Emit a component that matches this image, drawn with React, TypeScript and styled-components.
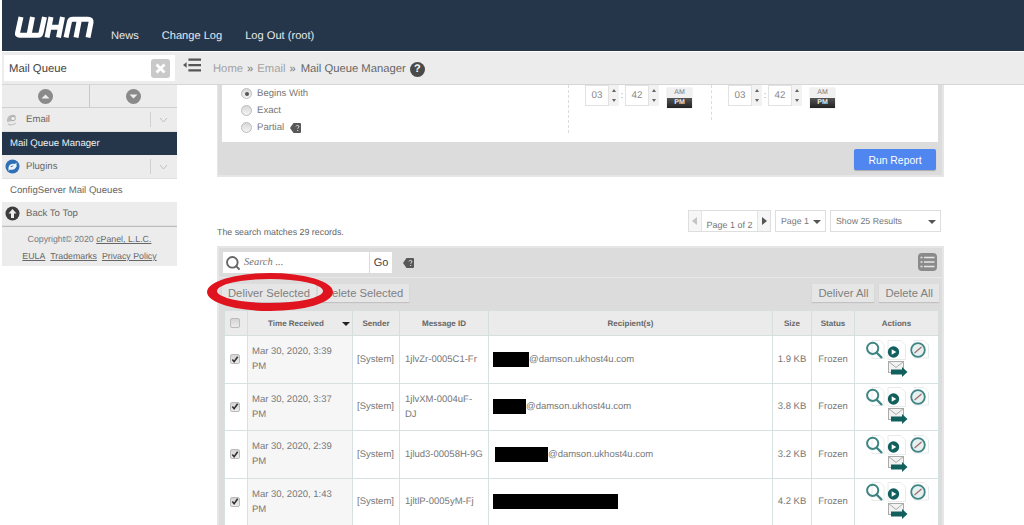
import React from "react";
import styled, { createGlobalStyle } from "styled-components";
import { Search } from "lucide-react";

const Global = createGlobalStyle`
  html, body { margin: 0; padding: 0; background: #fff; }
  body { font-family: "Liberation Sans", Arial, sans-serif; color: #666; overflow: hidden; text-rendering: geometricPrecision; }
  * { box-sizing: border-box; }
`;

const Page = styled.div`
  width: 1024px; height: 525px; overflow: hidden; position: relative; padding-left: 2px; background: #fff;
`;
const Header = styled.header`
  height: 51px; background: #25364a; display: flex; align-items: flex-start; padding-left: 11px;
`;
const Logo = styled.svg`width: 82px; height: 26px; margin-top: 15px; flex: none;`;
const TopNav = styled.nav`display: flex; gap: 23px; margin-left: 16px; padding-top: 29px;`;
const TopLink = styled.a`color: #e6eaee; font-size: 11.1px; line-height: 15px;`;

const TopBar = styled.div`
  height: 33px; margin-top: 1px; background: #ececec; border-bottom: 1px solid #d6d6d6; display: flex; align-items: flex-start;
`;
const SearchBox = styled.div`
  width: 171px; height: 26px; margin: 3px 0 0 2px; background: #fff; display: flex; align-items: center; justify-content: space-between; padding: 1px 5px 0 5px;
  font-size: 11.3px; color: #444; flex: none;
`;
const ClearBtn = styled.span`
  width: 19px; height: 19px; border-radius: 3px; background: #c9c9c9; display: flex; align-items: center; justify-content: center;
`;
const Collapse = styled.svg`width: 18px; height: 15px; margin: 6px 0 0 8px; flex: none;`;
const Crumbs = styled.div`
  display: flex; align-items: center; margin: 8px 0 0 12px; font-size: 11.25px; color: #a2a2a2; gap: 4px; height: 18px;
`;
const CrumbNow = styled.span`color: #666; margin-left: 1px;`;
const CrumbSep = styled.span`color: #777;`;
const Help = styled.span`
  width: 15px; height: 15px; border-radius: 50%; background: #4a4a4a; color: #fff; font-size: 11px; font-weight: 700; display: inline-flex; align-items: center; justify-content: center;
`;

const Body = styled.div`display: flex; align-items: flex-start;`;
const Sidebar = styled.aside`width: 175px; flex: none;`;
const ArrowRow = styled.div`display: flex; height: 23px; background: #ececec; border-bottom: 1px solid #d0d0d0;`;
const ArrowCell = styled.div`
  flex: 1; display: flex; align-items: center; justify-content: center;
  & + & { border-left: 1px solid #c8c8c8; }
`;
const SideRow = styled.div<{ $tone: "gray" | "dark" | "white" }>`
  height: ${p => (p.$tone === "gray" ? 24 : 23)}px; display: flex; align-items: center;
  background: ${p => (p.$tone === "dark" ? "#25364a" : p.$tone === "white" ? "#fff" : "#ececec")};
  color: ${p => (p.$tone === "dark" ? "#f0f2f4" : "#666")};
  font-size: 9.6px; padding-left: ${p => (p.$tone === "gray" ? 3 : 8)}px;
  padding-top: ${p => (p.$tone === "white" ? 1 : 0)}px;
  border-bottom: 1px solid ${p => (p.$tone === "gray" ? "#e0e0e0" : "transparent")};
`;
const SideIcon = styled.svg`width: 15px; height: 15px; margin-right: 6px; flex: none;`;
const SideLabel = styled.span`flex: 1;`;
const Chevron = styled.span`
  width: 26px; height: 15px; border-left: 1px solid #d0d0d0; display: flex; align-items: center; justify-content: center; flex: none; margin-right: 1px;
`;
const SideFoot = styled.div`
  height: 40px; background: #ececec; border-top: 1px solid #bdbdbd; text-align: center; font-size: 8.8px; line-height: 17px; color: #777; padding-top: 4px;
  a { color: #666; text-decoration: underline; }
`;
const FootLinks = styled.div`display: flex; justify-content: center; gap: 5px;`;

const Main = styled.main`margin-left: 40px; width: 727px; flex: none;`;

const FilterPanel = styled.section`
  background: #dcdcdc; padding: 0 4px; border: solid #e6e6e6; border-width: 0 2px 2px 1px; height: 92px;
`;
const FilterInner = styled.div`height: 57px; background: #fff; display: flex; align-items: flex-start;`;
const MatchCol = styled.div`width: 346px; height: 57px; padding: 0 0 0 19px; flex: none;`;
const RadioRow = styled.label`display: flex; align-items: center; height: 17px; font-size: 9.6px; color: #777; gap: 5px;`;
const Radio = styled.span<{ $on?: boolean }>`
  width: 11px; height: 11px; border-radius: 50%; border: 1px solid #bbb; display: flex; align-items: center; justify-content: center;
  background: linear-gradient(#d8d8d8, #f4f4f4);
  &::after { content: ""; width: 4px; height: 4px; border-radius: 50%; background: ${p => (p.$on ? "#555" : "transparent")}; }
`;
const TimeCol = styled.div<{ $h: number; $w: number }>`
  width: ${p => p.$w}px; height: ${p => p.$h}px; border-left: 1px dashed #dcdcdc; display: flex; align-items: flex-start; padding-left: 16px; flex: none;
`;
const TimeBox = styled.span`
  width: 24px; height: 21px; border: 1px solid #e2e2e2; font-size: 9.8px; color: #888; display: flex; align-items: center; justify-content: center; flex: none;
`;
const Spin = styled.span`
  width: 10px; height: 21px; background: #f2f2f2; display: flex; flex-direction: column; align-items: center; justify-content: space-around; flex: none;
`;
const UpTri = styled.i`border: 2.5px solid transparent; border-bottom: 3px solid #666; border-top: 0;`;
const DownTri = styled.i`border: 2.5px solid transparent; border-top: 3px solid #666; border-bottom: 0;`;
const Colon = styled.span`width: 6px; font-size: 9px; color: #999; line-height: 21px; text-align: center; flex: none;`;
const AmPm = styled.span`
  width: 25px; height: 20px; margin: 3px 0 0 8px; display: flex; flex-direction: column; font-size: 7px; font-weight: 700; text-align: center; line-height: 10px; flex: none; box-shadow: 0 0 1px #bbb;
`;
const Am = styled.span`background: #f0f0f0; color: #777; font-weight: 400;`;
const Pm = styled.span`background: linear-gradient(#555, #222); color: #eee;`;
const FilterFoot = styled.div`height: 33px; display: flex; justify-content: flex-end; align-items: flex-start; padding: 7px 2px 0 0;`;
const RunBtn = styled.button`
  width: 82px; height: 21px; border: 0; border-radius: 2px; background: #4f86f0; color: #fff; font: 10.4px "Liberation Sans", Arial, sans-serif; box-shadow: 0 1px 1px #aaa; padding: 1px 0 0;
`;

const PagerRow = styled.div`display: flex; justify-content: space-between; align-items: flex-end; margin-top: 33px; height: 23px;`;
const CountText = styled.span`font-size: 8.85px; line-height: 11px; color: #666; transform: translateY(5px);`;
const Pager = styled.div`display: flex; gap: 4px; margin-right: 3px; align-items: flex-start; height: 23px;`;
const PageNav = styled.div`display: flex; height: 22px; width: 83px; border: 1px solid #dedede; font-size: 9px; color: #777;`;
const NavArrow = styled.span<{ $dim?: boolean }>`
  width: 12px; display: flex; align-items: center; justify-content: center; flex: none; background: #f6f6f6;
  &::after { content: ""; border: 4px solid transparent; border-left: 5px solid ${p => (p.$dim ? "#c4c4c4" : "#555")}; border-right: 0; }
`;
const NavPrev = styled(NavArrow)`transform: scaleX(-1);`;
const NavLabel = styled.span`flex: 1; display: flex; align-items: flex-end; justify-content: center; padding-bottom: 1px; border: solid #e4e4e4; border-width: 0 1px;`;
const SelectBox = styled.div<{ $w: number }>`
  width: ${p => p.$w}px; height: 22px; border: 1px solid #dedede; display: flex; align-items: center; justify-content: space-between; padding: 0 4px 1px 5px; font-size: 8.8px; color: #777; background: #fff;
  &::after { content: ""; border: 4px solid transparent; border-top: 4px solid #555; border-bottom: 0; margin-top: 2px; }
`;

const TablePanel = styled.section`margin-top: 13px; background: #dcdcdc; border: 2px solid #e6e6e6; border-bottom: 0; height: 290px; padding: 0 4px;`;
const SearchRow = styled.div`height: 30px; border-bottom: 1px solid #e8e8e8; margin: 0 -4px; padding: 4px 5px 0 4px; display: flex; align-items: flex-start;`;
const TableSearch = styled.div`
  width: 146px; height: 21px; background: #fff; display: flex; align-items: center; padding-left: 2px; gap: 3px; font: italic 10.5px "Liberation Serif", serif; color: #777;
`;
const GoBox = styled.div`width: 22px; height: 21px; margin-left: 1px; background: #fff; color: #444; font-size: 11px; display: flex; align-items: center; justify-content: center;`;
const TagIcon = styled.svg`width: 11px; height: 10px; margin: 6px 0 0 11px; flex: none;`;
const InlineTag = styled(TagIcon)`margin: 0 0 0 1px;`;
const ListIcon = styled.svg`width: 19px; height: 18px; margin: 1px 0 0 auto; flex: none;`;
const ButtonRow = styled.div`display: flex; align-items: flex-start; gap: 2px; height: 32px; padding: 6px 0 0 0; margin: 0 -1px 0 -1px;`;
const GrayBtn = styled.button`
  height: 18px; padding: 0 6px; border: 0; background: #e6e6e6; color: #808080; font: 11.25px "Liberation Sans", Arial, sans-serif; box-shadow: 0 1px 1px #c2c2c2; white-space: nowrap;
`;
const Spacer = styled.span`flex: 1;`;
const RightBtn = styled(GrayBtn)`margin-left: 3px;`;

const Table = styled.table`width: 714px; border-collapse: collapse; table-layout: fixed; background: #fff; margin-left: 1px;`;
const Th = styled.th`
  height: 25px; background: #ebebeb; border: 1px solid #d6dede; font-size: 8px; font-weight: 700; color: #666; text-align: center; padding: 0; position: relative;
`;
const SortTh = styled(Th)`padding-right: 8px;`;
const SortMark = styled.i`position: absolute; right: 2px; top: 11px; border: 4px solid transparent; border-top: 4px solid #222; border-bottom: 0;`;
const Td = styled.td<{ $sorted?: boolean; $center?: boolean }>`
  height: 47.5px; border: 1px solid #d6e2e2; font-size: 9.5px; line-height: 15px; color: #777; padding: 0 4px; overflow: hidden; vertical-align: middle;
  background: ${p => (p.$sorted ? "#f6f6f6" : "#fff")};
  text-align: ${p => (p.$center ? "center" : "left")};
`;
const IdCell = styled(Td)`white-space: pre-line; padding-left: 5px;`;
const Check = styled.span<{ $on?: boolean }>`
  width: 10px; height: 10px; border-radius: 2px; border: 1px solid #bbb; background: linear-gradient(#d4d4d4, #ececec); display: inline-flex; align-items: center; justify-content: center; vertical-align: middle; margin-right: 2px;
  svg { display: ${p => (p.$on ? "block" : "none")}; }
`;
const Redact = styled.span<{ $w: number; $ml?: number }>`
  display: inline-block; width: ${p => p.$w}px; height: 15px; background: #000; vertical-align: middle; margin-left: ${p => p.$ml ?? 0}px;
`;
const ActionWrap = styled.div`display: flex; flex-wrap: wrap; justify-content: center; width: 66px; margin: 0 auto; gap: 0 2px;`;
const ActIcon = styled.svg`width: 20px; height: 20px; flex: none;`;
const MailIcon = styled.svg`width: 20px; height: 18px; flex: none; margin: 1px 0 0 2px;`;

const Ellipse = styled.svg`position: absolute; left: 206px; top: 272px; width: 130px; height: 42px; pointer-events: none;`;

const teal = "#3f8583";
const dark = "#12605e";
const sheet = "#e8ebeb";

const Actions = () => (
  <ActionWrap>
    <ActIcon viewBox="0 0 20 20">
      <path d="M7 .5h8l4 4v14H7z" fill="#fff" stroke={sheet} />
      <circle cx="7.700" cy="8.300" r="5.600" fill="none" stroke={teal} strokeWidth="2" />
      <path d="M11.500 12.500l5.500 5.500" stroke={teal} strokeWidth="2.400" />
    </ActIcon>
    <ActIcon viewBox="0 0 20 20">
      <path d="M1 .5h13l4.500 4.500v14.500H1z" fill="#fff" stroke={sheet} />
      <circle cx="6.500" cy="12" r="5.700" fill={dark} />
      <path d="M4.700 9.300l4.600 2.700-4.600 2.700z" fill="#fff" />
    </ActIcon>
    <ActIcon viewBox="0 0 20 20">
      <path d="M5 .5h10l4.500 4.500v13H5z" fill="#fff" stroke={sheet} />
      <circle cx="9" cy="10" r="6.800" fill="#e6f0f0" stroke={teal} strokeWidth="1.800" />
      <path d="M5.500 13l7-6" stroke="#a06a6a" strokeWidth="1.200" />
    </ActIcon>
    <MailIcon viewBox="0 0 20 18">
      <rect x=".5" y=".5" width="15" height="11" fill="#f2f2f2" stroke="#aaa" />
      <path d="M.5.500l7.500 6 7.500-6" fill="none" stroke="#aaa" />
      <path d="M3 8.500h11V6l5.500 5-5.500 5v-2.500H3z" fill={dark} />
    </MailIcon>
  </ActionWrap>
);

const Tag = ({ as: C = TagIcon }: { as?: typeof TagIcon }) => (
  <C viewBox="0 0 11 10">
    <path d="M3.500 0H10q1 0 1 1v8q0 1-1 1H3.500L0 5z" fill="#585858" />
    <path d="M6 3.400c.3-1.400 3-1.300 2.900.3 0 1-1.200 1-1.200 2M7.700 7v1" fill="none" stroke="#e8e8e8" strokeWidth="1" />
  </C>
);

const rows = [
  { time: "Mar 30, 2020, 3:39 PM", id: "1jlvZr-0005C1-Fr", red: <Redact $w={36} />, tail: "@damson.ukhost4u.com", size: "1.9 KB" },
  { time: "Mar 30, 2020, 3:37 PM", id: "1jlvXM-0004uF-\nDJ", red: <Redact $w={33} />, tail: "@damson.ukhost4u.com", size: "3.8 KB" },
  { time: "Mar 30, 2020, 2:39 PM", id: "1jlud3-00058H-9G", red: <Redact $w={53} $ml={2} />, tail: "@damson.ukhost4u.com", size: "3.2 KB" },
  { time: "Mar 30, 2020, 1:43 PM", id: "1jltlP-0005yM-Fj", red: <Redact $w={125} />, tail: "", size: "4.2 KB" },
];

const TimeSet = () => (
  <>
    <TimeBox>03</TimeBox>
    <Spin><UpTri /><DownTri /></Spin>
    <Colon>:</Colon>
    <TimeBox>42</TimeBox>
    <Spin><UpTri /><DownTri /></Spin>
    <AmPm><Am>AM</Am><Pm>PM</Pm></AmPm>
  </>
);

const CheckMark = () => (
  <svg width="9" height="9" viewBox="0 0 9 9"><path d="M1.500 4.500l2 2.500 4-5.500" fill="none" stroke="#333" strokeWidth="1.800" /></svg>
);

export default function App() {
  return (
    <Page>
      <Global />
      <Header>
        <Logo viewBox="0 0 82 26">
          <g fill="none" stroke="#fff" strokeWidth="5" strokeLinejoin="round">
            <path d="M8 2L4.500 18Q4 20.300 6.500 20.300H25Q27.500 20.300 28 18L31.500 2" />
            <path d="M19.500 2L16 20" />
            <path d="M38 2L34 22.500M49.500 2L45.500 22.500M36 12.200H48" />
            <path d="M53 22.500L56.500 6.500Q57 4.200 60 4.200H75Q78.500 4.200 78 7.500L75 22.500M66.500 4L63 22.500" />
          </g>
        </Logo>
        <TopNav>
          <TopLink>News</TopLink>
          <TopLink>Change Log</TopLink>
          <TopLink>Log Out (root)</TopLink>
        </TopNav>
      </Header>
      <TopBar>
        <SearchBox>
          Mail Queue
          <ClearBtn>
            <svg width="11" height="11" viewBox="0 0 11 11"><path d="M1.500 1.500l8 8M9.500 1.500l-8 8" stroke="#fff" strokeWidth="2.800" /></svg>
          </ClearBtn>
        </SearchBox>
        <Collapse viewBox="0 0 20 16">
          <path d="M6 1.500h14M6 7.500h14M6 13.500h14" stroke="#555" strokeWidth="2.400" />
          <path d="M0 7.500l4-3v6z" fill="#555" />
        </Collapse>
        <Crumbs>
          <span>Home</span><CrumbSep>»</CrumbSep><span>Email</span><CrumbSep>»</CrumbSep>
          <CrumbNow>Mail Queue Manager</CrumbNow><Help>?</Help>
        </Crumbs>
      </TopBar>
      <Body>
        <Sidebar>
          <ArrowRow>
            <ArrowCell>
              <svg width="15" height="15" viewBox="0 0 15 15"><circle cx="7.500" cy="7.500" r="7.500" fill="#8a8a8a" /><path d="M3.500 9.500l4-4 4 4z" fill="#eee" /></svg>
            </ArrowCell>
            <ArrowCell>
              <svg width="15" height="15" viewBox="0 0 15 15"><circle cx="7.500" cy="7.500" r="7.500" fill="#8a8a8a" /><path d="M3.500 5.500l4 4 4-4z" fill="#eee" /></svg>
            </ArrowCell>
          </ArrowRow>
          <SideRow $tone="gray">
            <SideIcon viewBox="0 0 15 15"><path d="M2 8a5.500 5.500 0 0 1 9-4l-3 5-6 1z" fill="#bdbdbd" /><circle cx="8" cy="6.500" r="2.300" fill="#eee" stroke="#aaa" /><path d="M3 12q4 2 8-1" fill="none" stroke="#c8c8c8" strokeWidth="1.500" /></SideIcon>
            <SideLabel>Email</SideLabel>
            <Chevron><svg width="9" height="6" viewBox="0 0 9 6"><path d="M1 1l3.500 4L8 1" fill="none" stroke="#c0c0c0" /></svg></Chevron>
          </SideRow>
          <SideRow $tone="dark">Mail Queue Manager</SideRow>
          <SideRow $tone="gray">
            <SideIcon viewBox="0 0 15 15"><circle cx="7.500" cy="7.500" r="7" fill="#2f6fb5" /><path d="M3.500 8.500q1-4.500 6.500-3.500l1.500-1.500v4.500H7l1.500-1.500q-3-.5-3.500 2.500zM11.500 7q-1 4.500-6.500 3.500L3.500 12V8.500" fill="#eef3f8" /></SideIcon>
            <SideLabel>Plugins</SideLabel>
            <Chevron><svg width="9" height="6" viewBox="0 0 9 6"><path d="M1 1l3.500 4L8 1" fill="none" stroke="#c0c0c0" /></svg></Chevron>
          </SideRow>
          <SideRow $tone="white">ConfigServer Mail Queues</SideRow>
          <SideRow $tone="gray">
            <SideIcon viewBox="0 0 15 15"><circle cx="7.500" cy="7.500" r="7" fill="#3c3c3c" /><path d="M7.500 3l4 4.500H9V12H6V7.500H3.500z" fill="#eee" /></SideIcon>
            <SideLabel>Back To Top</SideLabel>
          </SideRow>
          <SideFoot>
            <div>Copyright© 2020 <a>cPanel, L.L.C.</a></div>
            <FootLinks><a>EULA</a><a>Trademarks</a><a>Privacy Policy</a></FootLinks>
          </SideFoot>
        </Sidebar>
        <Main>
          <FilterPanel>
            <FilterInner>
              <MatchCol>
                <RadioRow><Radio $on />Begins With</RadioRow>
                <RadioRow><Radio />Exact</RadioRow>
                <RadioRow><Radio />Partial <Tag as={InlineTag} /></RadioRow>
              </MatchCol>
              <TimeCol $h={48} $w={143}><TimeSet /></TimeCol>
              <TimeCol $h={35} $w={200}><TimeSet /></TimeCol>
            </FilterInner>
            <FilterFoot><RunBtn>Run Report</RunBtn></FilterFoot>
          </FilterPanel>
          <PagerRow>
            <CountText>The search matches 29 records.</CountText>
            <Pager>
              <PageNav>
                <NavPrev $dim />
                <NavLabel>Page 1 of 2</NavLabel>
                <NavArrow />
              </PageNav>
              <SelectBox $w={51}>Page 1</SelectBox>
              <SelectBox $w={111}>Show 25 Results</SelectBox>
            </Pager>
          </PagerRow>
          <TablePanel>
            <SearchRow>
              <TableSearch><Search size={16} strokeWidth={2.800} color="#666" />Search ...</TableSearch>
              <GoBox>Go</GoBox>
              <Tag />
              <ListIcon viewBox="0 0 19 18">
                <rect width="19" height="18" rx="4" fill="#8a8a8a" />
                <path d="M2.500 4.500h2M6 4.500h10.500M2.500 9h2M6 9h10.500M2.500 13.500h2M6 13.500h10.500" stroke="#e6e6e6" strokeWidth="1.500" />
              </ListIcon>
            </SearchRow>
            <ButtonRow>
              <GrayBtn>Deliver Selected</GrayBtn>
              <GrayBtn>Delete Selected</GrayBtn>
              <Spacer />
              <RightBtn>Deliver All</RightBtn>
              <RightBtn>Delete All</RightBtn>
            </ButtonRow>
            <Table>
              <colgroup>
                <col width="23" /><col width="105" /><col width="47" /><col width="89" /><col width="284" /><col width="39" /><col width="43" /><col width="84" />
              </colgroup>
              <thead>
                <tr>
                  <Th><Check /></Th>
                  <SortTh>Time Received<SortMark /></SortTh>
                  <Th>Sender</Th>
                  <Th>Message ID</Th>
                  <Th>Recipient(s)</Th>
                  <Th>Size</Th>
                  <Th>Status</Th>
                  <Th>Actions</Th>
                </tr>
              </thead>
              <tbody>
                {rows.map(r => (
                  <tr key={r.id}>
                    <Td $center><Check $on><CheckMark /></Check></Td>
                    <Td $sorted>{r.time}</Td>
                    <Td>[System]</Td>
                    <IdCell>{r.id}</IdCell>
                    <Td>{r.red}{r.tail}</Td>
                    <Td $center>{r.size}</Td>
                    <Td $center>Frozen</Td>
                    <Td><Actions /></Td>
                  </tr>
                ))}
              </tbody>
            </Table>
          </TablePanel>
        </Main>
      </Body>
      <Ellipse viewBox="0 0 130 42">
        <path
          fillRule="evenodd"
          fill="#e0141f"
          d="M1 20a63 19 0 1 0 126 0a63 19 0 1 0-126 0zM11 19a53 12 0 1 0 106 0a53 12 0 1 0-106 0z"
        />
      </Ellipse>
    </Page>
  );
}
